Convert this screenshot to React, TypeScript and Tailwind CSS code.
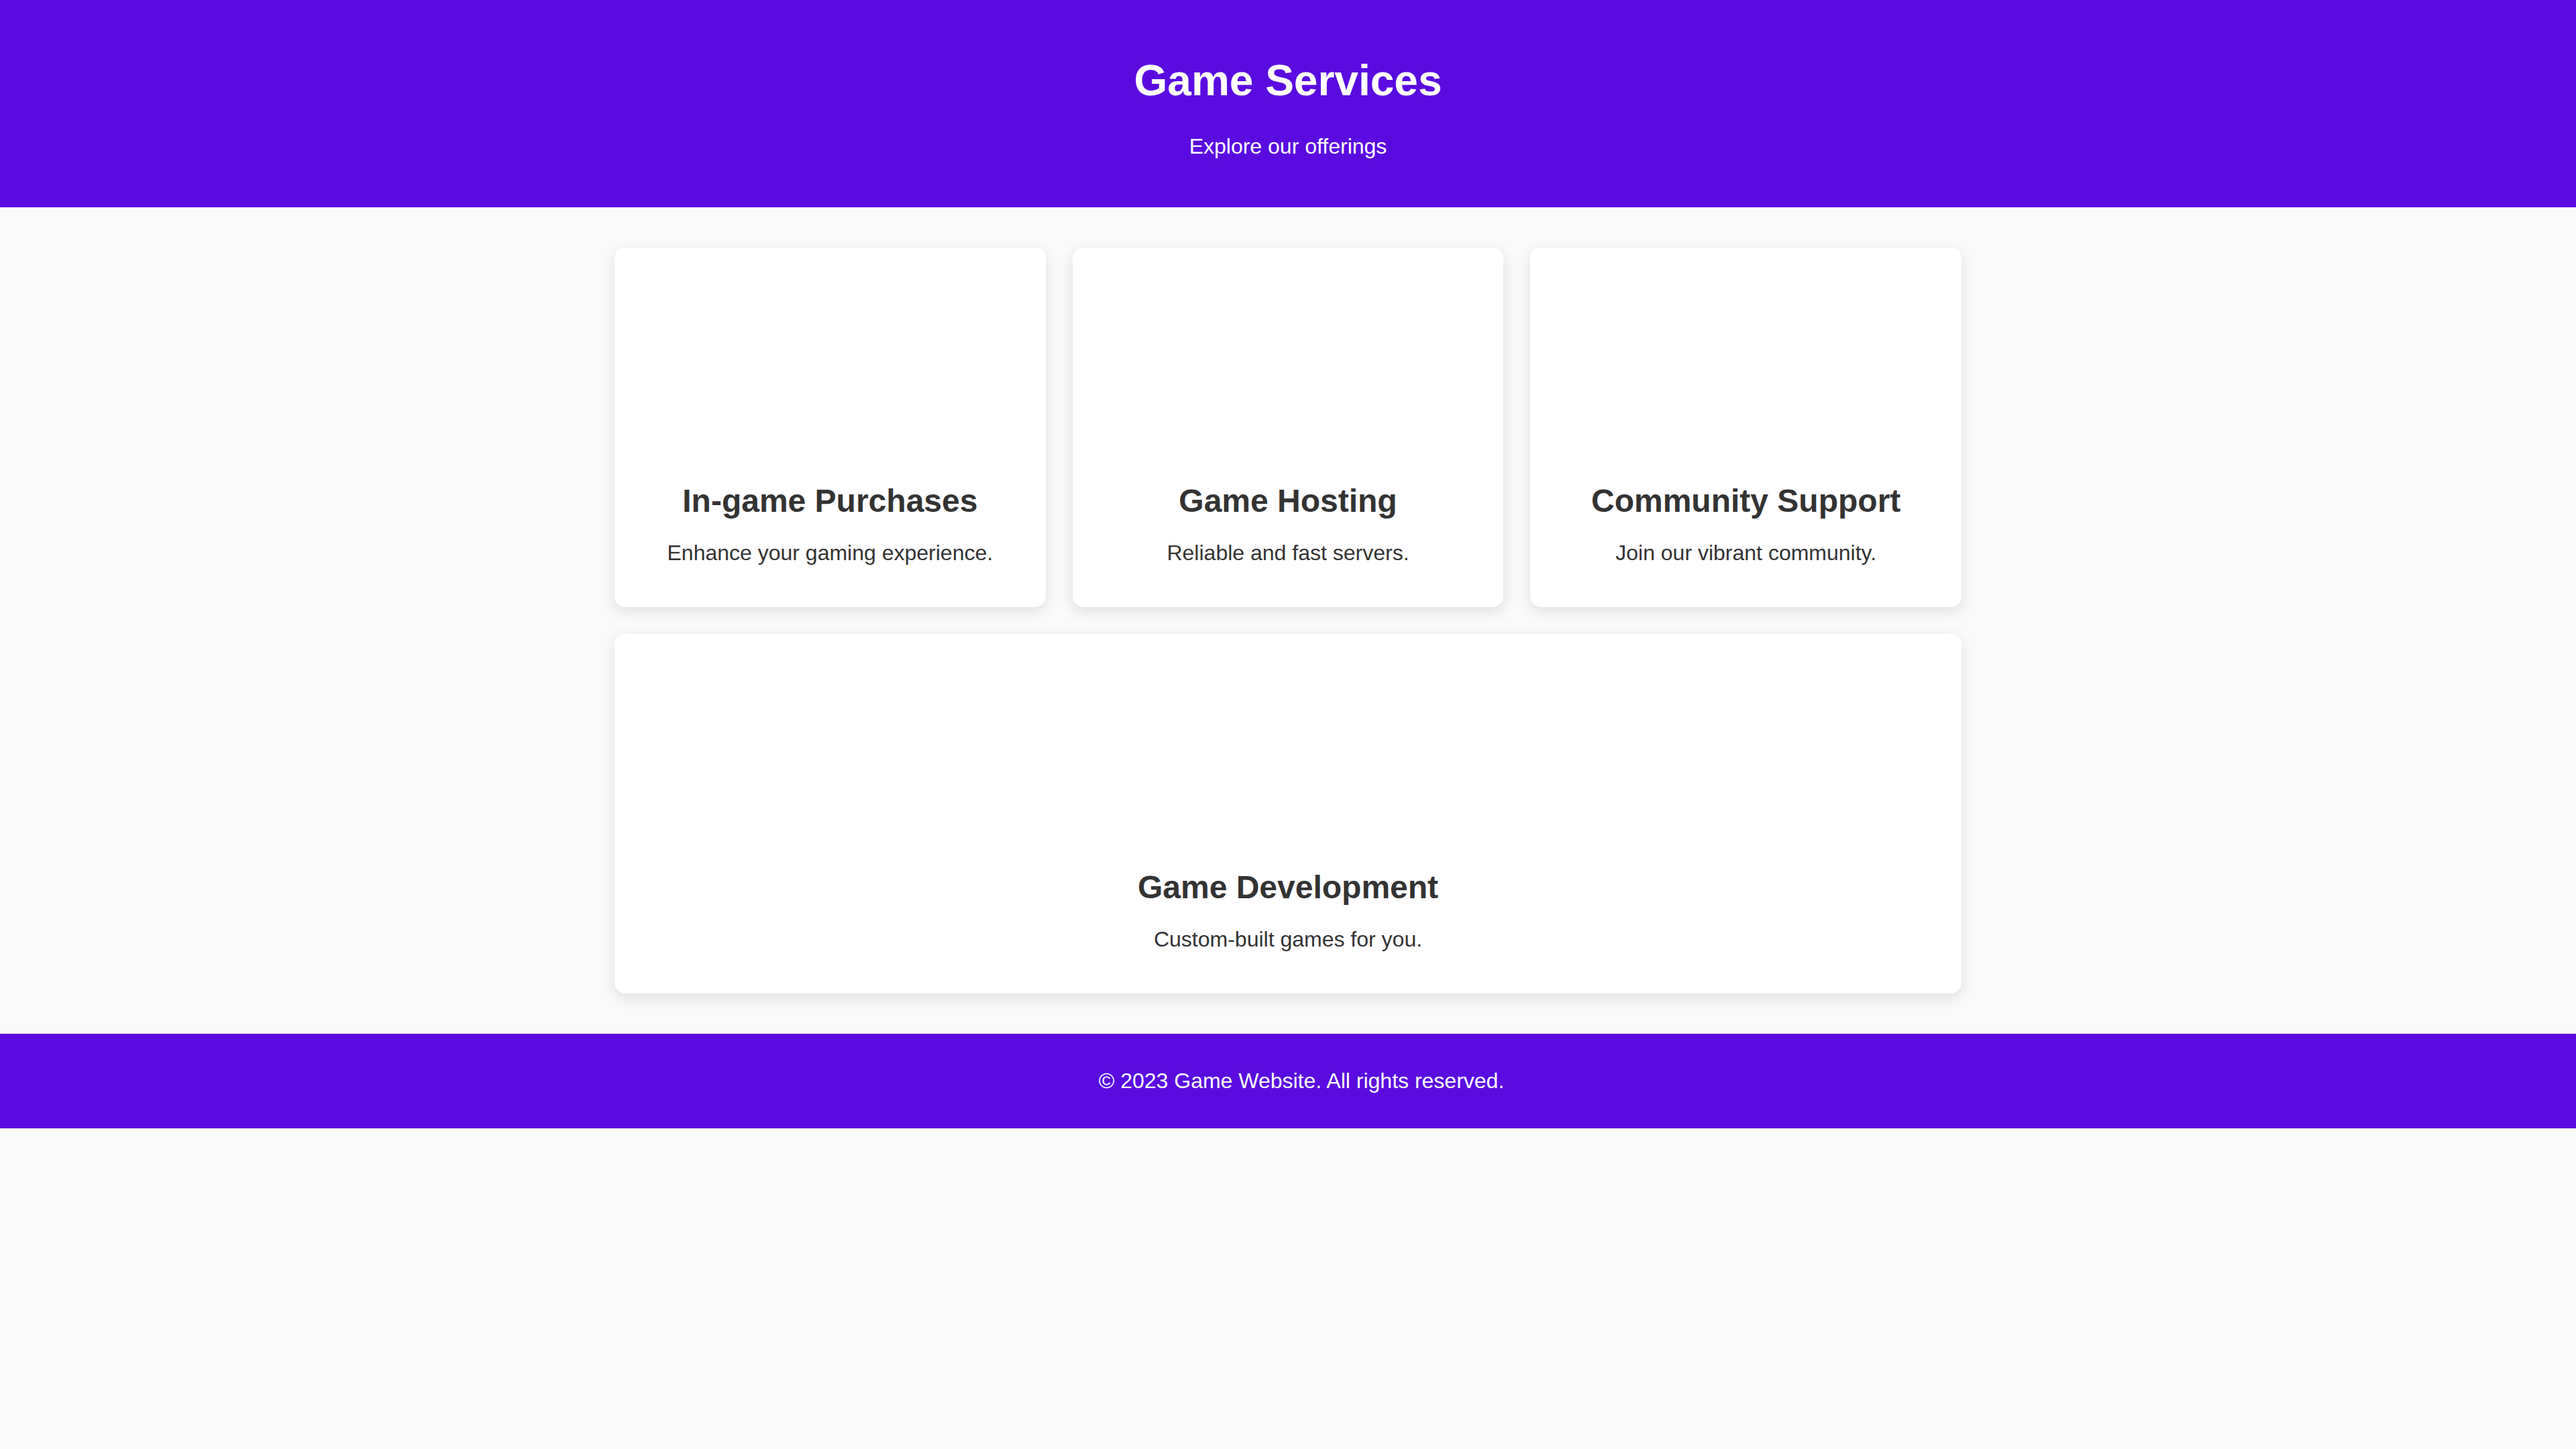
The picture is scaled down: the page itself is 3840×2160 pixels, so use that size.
const services = [
  { title: 'In-game Purchases', text: 'Enhance your gaming experience.' },
  { title: 'Game Hosting', text: 'Reliable and fast servers.' },
  { title: 'Community Support', text: 'Join our vibrant community.' },
  { title: 'Game Development', text: 'Custom-built games for you.', wide: true },
]

function ServiceCard({ title, text, wide }: { title: string; text: string; wide?: boolean }) {
  return (
    <div
      className={
        'bg-white rounded-[16px] shadow-[0_6px_20px_rgba(0,0,0,0.1)] p-[30px] text-center text-[#333] ' +
        (wide ? 'col-span-3' : '')
      }
    >
      {/* image placeholder (no picture loaded) */}
      <div className="h-[300px]" />
      <h2 className="mt-[20px] text-[48px] font-bold leading-[55px]">{title}</h2>
      <p className="mt-[32px] mb-[32px] text-[32px] leading-[37px]">{text}</p>
    </div>
  )
}

export default function App() {
  return (
    <div className="min-h-screen bg-[#f9f9f9] font-['Liberation_Sans',Arial,sans-serif]">
      {/* Header */}
      <header className="bg-[#5a0ce0] text-white text-center pt-[83px] pb-[72px]">
        <h1 className="text-[64px] font-bold leading-[74px]">Game Services</h1>
        <p className="mt-[43px] text-[32px] leading-[37px]">Explore our offerings</p>
      </header>

      {/* Services */}
      <main className="py-[60px]">
        <div className="w-[2008px] mx-auto grid grid-cols-3 gap-[40px]">
          {services.map((s) => (
            <ServiceCard key={s.title} title={s.title} text={s.text} wide={s.wide} />
          ))}
        </div>
      </main>

      {/* Footer */}
      <footer className="bg-[#5a0ce0] text-white py-[20px] pl-[40px] flex justify-center">
        <p className="my-[32px] text-[32px] leading-[37px]">© 2023 Game Website. All rights reserved.</p>
      </footer>
    </div>
  )
}
